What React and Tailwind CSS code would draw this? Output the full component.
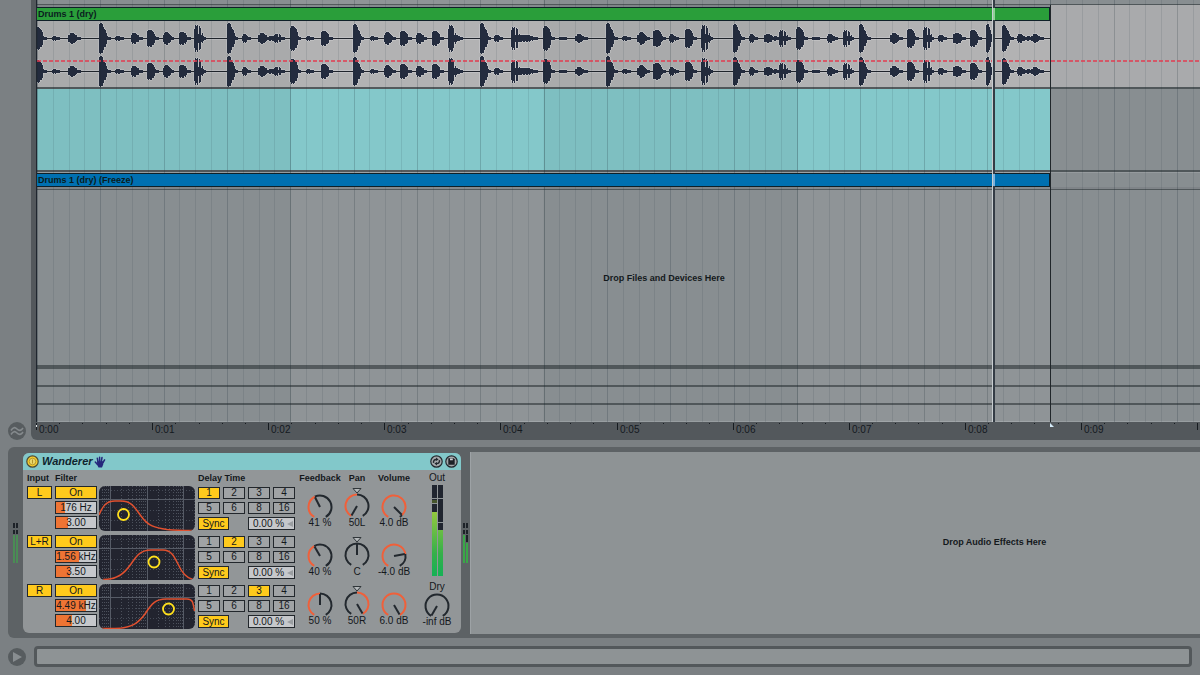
import clsx from 'clsx';

const BAR = 253.3;
const SECOND = 116.1;
const CLIP_END = 1013;

// x, width, amplitude, shape (offsets from the clip start)
const HITS = [
  [-2, 10, 11, 'fat'], [15, 6, 2, 'blob'], [31, 11, 5, 'blob'], [62, 10, 15, 'hit'], [78, 7, 2, 'blob'],
  [94, 10, 5, 'blob'], [110, 10, 8, 'fat'], [126, 9, 6, 'blob'], [142, 10, 6, 'fat'], [157, 10, 13, 'spiky'],
  [190, 9, 15, 'hit'], [205, 7, 4, 'blob'], [221, 11, 5, 'blob'], [232, 6, 2, 'fat'], [237, 9, 4, 'spiky'],
  [253, 9, 12, 'fat'], [269, 6, 2, 'blob'], [284, 10, 7, 'fat'], [316, 9, 14, 'hit'], [333, 6, 2, 'blob'],
  [347, 10, 6, 'blob'], [363, 10, 7, 'fat'], [379, 9, 5, 'blob'], [395, 10, 7, 'fat'], [411, 8, 13, 'spiky'],
  [418, 6, 3, 'hit'], [443, 9, 15, 'hit'], [457, 7, 3, 'blob'], [474, 9, 11, 'spiky'], [483, 16, 3, 'fat'],
  [506, 10, 12, 'fat'], [522, 6, 1, 'blob'], [538, 11, 4, 'blob'], [569, 10, 15, 'hit'], [585, 7, 2, 'blob'],
  [600, 11, 6, 'blob'], [616, 11, 8, 'fat'], [632, 8, 4, 'blob'], [648, 10, 9, 'fat'], [664, 10, 13, 'spiky'],
  [696, 10, 14, 'hit'], [712, 7, 4, 'blob'], [727, 11, 4, 'fat'], [737, 4, 2, 'fat'], [742, 10, 8, 'spiky'],
  [759, 10, 11, 'fat'], [775, 6, 1, 'blob'], [790, 9, 4, 'blob'], [806, 9, 8, 'spiky'], [822, 10, 14, 'hit'],
  [853, 11, 5, 'blob'], [870, 10, 9, 'fat'], [886, 9, 11, 'spiky'], [901, 7, 3, 'blob'], [916, 11, 5, 'fat'],
  [933, 10, 8, 'fat'], [949, 7, 14, 'hit'], [965, 10, 13, 'hit'], [980, 10, 4, 'blob'], [990, 4, 2, 'fat'],
  [994, 11, 4, 'blob'],
];

// height of each slice of a hit, relative to its peak
const SHAPES = {
  hit: [0.95, 1, 1, 0.9, 0.75, 0.6, 0.5, 0.3, 0.15, 0.08],
  fat: [0.85, 1, 1, 1, 0.95, 0.85, 0.75, 0.5, 0.2, 0.1],
  blob: [0.5, 0.9, 1, 1, 1, 0.85, 0.6, 0.5, 0.25, 0.15],
  spiky: [0.7, 1, 0.9, 1, 0.3, 0.9, 0.8, 0.25, 0.35, 0.15],
};

const wavePath = (mid) =>
  HITS.map(([x, w, amp, shape]) => {
    let d = '';
    for (let i = 0; i < w + 2; i++) {
      const px = x + i;
      if (px < 0 || px >= CLIP_END) continue;
      const level = i < w ? SHAPES[shape][Math.floor((i / w) * 10)] : 0.05;
      const h = Math.round(amp * level);
      const up = Math.max(1, h);
      const down = Math.max(1, h - (i % 3 === 2 ? 1 : 0));
      d += `M${px} ${mid - up}h1V${mid + 1 + down}h-1z`;
    }
    return d;
  }).join('');

const Waveform = () => (
  <svg className="relative block h-[66px] w-full" aria-hidden="true">
    {[17, 50].map((mid) => (
      <g key={mid}>
        <path d={wavePath(mid)} fill="none" stroke="#cdcdd0" strokeWidth="1" />
        <rect x="0" y={mid - 1} width="1013" height="3" fill="#c0c0c3" />
        <rect x="0" y={mid} width="1013" height="1" fill="#20242c" />
        <path d={wavePath(mid)} fill="#242c3f" shapeRendering="crispEdges" />
      </g>
    ))}
  </svg>
);

const TimeGrid = () => (
  <svg className="pointer-events-none absolute inset-0 h-full w-full" aria-hidden="true">
    {Array.from({ length: 8 }, (_, i) => (
      <rect key={i} x={i * 2 * BAR} y="0" width={BAR} height="100%" fill="#10202a" opacity="0.05" />
    ))}
    {Array.from({ length: 240 }, (_, i) => (
      <rect
        key={i}
        x={Math.round((i * BAR) / 16)}
        y="0"
        width="1"
        height="100%"
        fill="#182830"
        opacity={i % 16 === 0 ? 0.3 : i % 4 === 0 ? 0.2 : 0.1}
      />
    ))}
  </svg>
);

const ClipHeader = ({ name, className }) => (
  <div className="relative z-10 h-[14px]">
    <button
      type="button"
      className={clsx(
        'flex h-[14px] w-[1013px] items-center border-y border-r border-[#0f2028] px-px text-left text-[9px] leading-3 font-bold text-[#0a1c20]',
        className
      )}
    >
      {name}
    </button>
  </div>
);

const Separator = ({ className }) => <div className={clsx('relative bg-[#545a5d]', className)} />;

const Arrangement = () => (
  <section className="flex" aria-label="Arrangement">
    <div className="flex w-[31px] shrink-0 flex-col justify-end pl-[8px]">
      <button type="button" aria-label="Automation" className="size-[18px] rounded-full bg-[#575c5f]">
        <svg viewBox="0 0 18 18" className="size-[18px]" fill="none" stroke="#858a8d" strokeWidth="1.6">
          <path d="M3 8.500C5 5 7 5 9 7s4 2 6-1M3 12.500C5 9 7 9 9 11s4 2 6-1" />
        </svg>
      </button>
    </div>
    <div className="min-w-0 grow rounded-bl-md bg-[#53585c] pl-[5px]">
      <div className="relative overflow-hidden border-l border-[#20262f] bg-[#8f9497]">
        <div className="h-1" />
        <Separator className="h-px" />
        <div className="flex">
          <div className="w-[1013px] shrink-0">
            <div className="h-[2px] bg-[#858a8e]" />
            <ClipHeader name="Drums 1 (dry)" className="bg-[#2a9e3a]" />
            <div className="bg-[#b2b2b3]">
              <Waveform />
            </div>
          </div>
          <div className="grow bg-[#b1b2b4]" />
        </div>
        <Separator className="h-[2px]" />
        <div className="h-[81px] w-[1013px] bg-[#84c8ca]" />
        <Separator className="h-[2px]" />
        <div className="h-px bg-[#9da2a5]" />
        <ClipHeader name="Drums 1 (dry) (Freeze)" className="bg-[#0070b1]" />
        <div className="h-[2px] bg-[#858a8e]" />
        <Separator className="h-px" />
        <div className="flex h-[175px] items-center justify-center pt-[2px] pl-[91px] text-[9px] font-bold text-[#14191c]">
          Drop Files and Devices Here
        </div>
        <Separator className="h-1" />
        <div className="h-4" />
        <Separator className="h-[2px]" />
        <div className="h-4" />
        <Separator className="h-[2px]" />
        <div className="h-[17px] border-b border-[#a0a5a8]" />
        <TimeGrid />
        {/* volume automation */}
        <svg className="pointer-events-none absolute inset-x-0 top-[60px] h-[2px] w-full" aria-hidden="true">
          <line x1="0" y1="1" x2="100%" y2="1" stroke="#e23c50" strokeWidth="1.500" strokeDasharray="4 2" />
        </svg>
        <div className="absolute inset-y-0 left-[955px] z-20 w-[3px] border-l border-[#c8cdd0] bg-[#343c45]">
          <div className="mt-[8px] h-3 bg-[#8fd096]" />
          <div className="mt-[154px] h-3 bg-[#7cb2dc]" />
        </div>
        <div className="absolute top-[5px] bottom-0 left-[1013px] w-px bg-[#20262a]" />
      </div>
      <Ruler />
    </div>
  </section>
);

const Ruler = () => (
  <div className="relative h-[18px] overflow-hidden text-[10px] text-[#14191f]">
    <svg className="absolute inset-0 h-full w-full" aria-hidden="true">
      {Array.from({ length: 80 }, (_, i) => (
        <rect
          key={i}
          x={Math.round((i * SECOND) / 5)}
          y="1"
          width="1"
          height={i % 5 === 0 ? 7 : 1}
          fill="#161b20"
        />
      ))}
      <path d="M1014 1v4h4z" fill="#d6ecfa" />
      <rect x="0" y="3" width="1" height="2" fill="#e4e8ea" />
    </svg>
    {Array.from({ length: 10 }, (_, i) => (
      <span key={i} className="absolute top-[2px] leading-3" style={{ left: Math.round(i * SECOND) + 3 }}>
        0:{String(i).padStart(2, '0')}
      </span>
    ))}
  </div>
);

const polar = (cx, cy, r, deg) => {
  const a = (deg * Math.PI) / 180;
  return [cx + r * Math.sin(a), cy - r * Math.cos(a)];
};

const arc = (cx, cy, r, from, to) => {
  const [x1, y1] = polar(cx, cy, r, from);
  const [x2, y2] = polar(cx, cy, r, to);
  return `M${x1} ${y1}A${r} ${r} 0 ${to - from > 180 ? 1 : 0} 1 ${x2} ${y2}`;
};

const Knob = ({ label, angle, value, pan, className }) => {
  const cx = 18;
  const cy = pan ? 20 : 21;
  const start = pan ? Math.min(0, angle) : -150;
  const end = pan ? Math.max(0, angle) : angle;
  const [px, py] = polar(cx, cy, 11, angle);
  return (
    <label className={clsx('relative flex w-9 flex-col items-center text-[10px] leading-[10px] whitespace-nowrap', className)}>
      <svg viewBox="0 0 36 32" className="h-8 w-9" fill="none" strokeWidth="2">
        {start > -150 && <path d={arc(cx, cy, 11.5, -150, start)} stroke="#22282e" />}
        {end < 150 && <path d={arc(cx, cy, 11.5, end, 150)} stroke="#22282e" />}
        {end > start && <path d={arc(cx, cy, 11.5, start, end)} stroke="#f0603a" />}
        <path d={`M${cx} ${cy}L${px} ${py}`} stroke="#22282e" />
        {pan && <path d="M14 2.500h8l-4 4.500z" stroke="#30363a" strokeWidth="1" fill="#b4b8ba" />}
      </svg>
      {value}
      <input
        type="range"
        min="-150"
        max="150"
        defaultValue={angle}
        aria-label={label}
        className="absolute inset-0 h-full w-full opacity-0"
      />
    </label>
  );
};

const Toggle = ({ on, className, children }) => (
  <button
    type="button"
    aria-pressed={!!on}
    className={clsx(
      'flex items-center justify-center border border-[#22272c] text-[10px] leading-none text-[#14181c]',
      on ? 'bg-[#ffca1c]' : 'bg-[#a0a3a5]',
      className
    )}
  >
    {children}
  </button>
);

const ValueBox = ({ label, value, fill }) => (
  <input
    type="text"
    aria-label={label}
    defaultValue={value}
    className="h-[13px] w-[42px] border border-[#22272c] text-center text-[10px] leading-none text-[#14181c]"
    style={{ background: `linear-gradient(90deg, #ee7434 ${fill}%, #c6c8cb ${fill}%)` }}
  />
);

const DOTTED = [3, 5, 7, 9, 22, 29, 33, 37, 40, 42, 44, 46, 59, 66, 70, 74, 77, 79, 81, 83, 95];

const FilterScreen = ({ curve, node }) => (
  <svg viewBox="0 0 96 45" className="h-[45px] w-24 rounded-md bg-[#22242f]" fill="none" role="img" aria-label="Filter curve">
    {DOTTED.map((x) => (
      <path key={x} d={`M${x}.5 0V45`} stroke="#4c515c" strokeDasharray="1 2" />
    ))}
    <path d="M0 4.500H96M0 24.500H96M0 34.500H96" stroke="#454a56" strokeDasharray="1 2" />
    <path d="M11.500 0V45M48.500 0V45M84.500 0V45M0 13.500H96" stroke="#565b66" />
    <path d={curve} stroke="#e0502f" strokeWidth="1.500" />
    <circle cx={node[0]} cy={node[1]} r="5.500" stroke="#ffe01c" strokeWidth="1.800" />
  </svg>
);

const BANDS = [
  {
    input: 'L',
    freq: ['176 Hz', 22],
    q: ['3.00', 30],
    curve: 'M0 29C4 19 8 15 16 15H22C33 15 36 22 42 30C49 40 56 42 68 43.500C78 44.500 88 44.500 94 44.500',
    node: [24.5, 28.5],
    time: 1,
    feedback: ['41 %', -27],
    pan: ['50L', -150],
    volume: ['4.0 dB', 135],
  },
  {
    input: 'L+R',
    freq: ['1.56 kHz', 58],
    q: ['3.50', 35],
    curve: 'M4 44.500C18 44.500 25 39 32 29C38 20 42 15 52 15H64C72 15 75 21 79 29C83 38 87 43 94 44.500',
    node: [55, 27],
    time: 2,
    feedback: ['40 %', -30],
    pan: ['C', 0],
    volume: ['-4.0 dB', 80],
  },
  {
    input: 'R',
    freq: ['4.49 kHz', 74],
    q: ['4.00', 41],
    curve: 'M2 44.500H16C34 44 40 38 46 30C53 19 57 15 67 15H88C93 15 94 17 95.500 27',
    node: [69.5, 25],
    time: 3,
    feedback: ['50 %', 0],
    pan: ['50R', 150],
    volume: ['6.0 dB', 150],
  },
];

const Band = ({ band }) => (
  <>
    <Toggle on className="h-[13px] w-[25px]">{band.input}</Toggle>
    <div className="flex flex-col gap-[2px]">
      <Toggle on className="h-[13px] w-[42px]">On</Toggle>
      <ValueBox label="Frequency" value={band.freq[0]} fill={band.freq[1]} />
      <ValueBox label="Resonance" value={band.q[0]} fill={band.q[1]} />
    </div>
    <FilterScreen curve={band.curve} node={band.node} />
    <div className="grid w-[97px] grid-cols-4 grid-rows-[12px_12px_13px] gap-[3px] pt-px">
      {[1, 2, 3, 4, 5, 6, 8, 16].map((n) => (
        <Toggle key={n} on={n === band.time} className="h-3">{n}</Toggle>
      ))}
      <Toggle on className="col-span-2 h-[13px] w-[31px]">Sync</Toggle>
      <div className="relative col-span-2">
        <input
          type="text"
          aria-label="Delay offset"
          defaultValue="0.00 %"
          className="block h-[13px] w-full border border-[#22272c] bg-[#c6c8cb] pl-1 text-[10px] leading-none text-[#14181c]"
        />
        <svg viewBox="0 0 6 6" className="absolute top-[4px] right-[2px] size-[6px]" aria-hidden="true">
          <path d="M6 0v6L0 3z" fill="#9a9ea1" />
        </svg>
      </div>
    </div>
    <Knob label="Feedback" value={band.feedback[0]} angle={band.feedback[1]} />
    <Knob label="Pan" pan value={band.pan[0]} angle={band.pan[1]} />
    <Knob label="Volume" value={band.volume[0]} angle={band.volume[1]} />
  </>
);

const OutMeter = () => (
  <svg viewBox="0 0 11 91" className="h-[91px] w-[11px]" role="img" aria-label="Output level">
    <defs>
      <linearGradient id="level" x1="0" y1="27" x2="0" y2="91" gradientUnits="userSpaceOnUse">
        <stop offset="0" stopColor="#93c83e" />
        <stop offset="0.65" stopColor="#35b04a" />
        <stop offset="1" stopColor="#15b155" />
      </linearGradient>
    </defs>
    <path d="M0 0h5v91H0zM6 0h5v91H6z" fill="#20252f" />
    <path d="M0 27h5v64H0zM6 45h5v46H6z" fill="url(#level)" />
    <path d="M0 13.500h11M0 18.500h5M6 37.500h5" stroke="#8e9496" />
    <path d="M0 15h5v3H0z" fill="#46552c" />
  </svg>
);

const SideMeter = ({ active }) => (
  <svg viewBox="0 0 5 40" className="h-10 w-[5px]" aria-hidden="true">
    <path d="M0 0h2v5H0zM3 0h2v5H3zM0 7h2v4H0zM3 7h2v4H3z" fill="#1d2228" />
    <path d={active ? 'M0 12h2v28H0zM3 20h2v20H3z' : 'M0 12h2v28H0zM3 12h2v28H3z'} fill={active ? '#3aa648' : '#4a8c55'} />
    {active && <path d="M3 12h2v7H3z" fill="#1d2228" />}
  </svg>
);

const Device = () => (
  <article className="w-[438px] shrink-0 overflow-hidden rounded-md bg-[#929698] text-[#14181c]">
    <header className="flex h-[17px] items-center bg-[#82c8ca] px-[3px]">
      <button type="button" aria-label="Device on" className="size-[13px]">
        <svg viewBox="0 0 13 13" className="size-[13px]">
          <circle cx="6.500" cy="6.500" r="5.700" fill="#f4cb2c" stroke="#4c4d38" strokeWidth="1.200" />
          <circle cx="6.500" cy="6.500" r="3.300" fill="#e9d66a" stroke="#a98c22" strokeWidth="0.800" />
          <path d="M6.500 4.500v4" stroke="#a98c22" strokeWidth="0.900" />
        </svg>
      </button>
      <h2 className="pl-[3px] text-[11px] leading-none font-bold text-[#10242e] italic">Wanderer</h2>
      <svg viewBox="0 0 12 12" className="ml-px size-3" fill="none" stroke="#25287c" strokeLinecap="round" aria-hidden="true">
        <path d="M4 6 3.300 2.200M5.600 5.500V1.200M7.300 5.500 8 1.500M9 6.500 10.600 3.800M3.500 8.500 1.300 6" strokeWidth="1.500" />
        <path d="M3 5.200h6.500L9.200 8.500 8 11.500H4.500L3.300 9z" fill="#25287c" stroke="none" />
      </svg>
      <button type="button" aria-label="Hot-swap" className="ml-auto size-[13px]">
        <svg viewBox="0 0 13 13" className="size-[13px]" fill="none" stroke="#22282e">
          <circle cx="6.500" cy="6.500" r="5.700" fill="#a4a8ab" strokeWidth="1.200" />
          <path d="M3.600 7.800C3.200 5.500 4.500 4.200 6.500 4.400M9.400 5.200C9.800 7.500 8.500 8.800 6.500 8.600" strokeWidth="1.500" />
          <path d="M6 2.400 8.600 4.400 6 6zM7 7 4.400 8.600 7 10.600z" fill="#22282e" stroke="none" />
        </svg>
      </button>
      <button type="button" aria-label="Save preset" className="ml-[2px] size-[13px]">
        <svg viewBox="0 0 13 13" className="size-[13px]">
          <circle cx="6.500" cy="6.500" r="5.700" fill="#a4a8ab" stroke="#22282e" strokeWidth="1.200" />
          <path d="M3.300 3.300h5.400l1 1v5.400H3.300z" fill="#1c2127" />
          <path d="M5 3.500h2.800v1.800H5z" fill="#d0d3d5" />
        </svg>
      </button>
    </header>
    <div className="flex pl-1">
      <div className="grid grid-cols-[28px_44px_99px_104px_37px_37px_37px] grid-rows-[16px_49px_49px_49px]">
        <h3 className="text-[9px] leading-4 font-bold">Input</h3>
        <h3 className="text-[9px] leading-4 font-bold">Filter</h3>
        <span />
        <h3 className="text-[9px] leading-4 font-bold">Delay Time</h3>
        <h3 className="flex w-9 justify-center text-[9px] leading-4 font-bold">Feedback</h3>
        <h3 className="w-9 text-center text-[9px] leading-4 font-bold">Pan</h3>
        <h3 className="w-9 text-center text-[9px] leading-4 font-bold">Volume</h3>
        {BANDS.map((band) => (
          <Band key={band.input} band={band} />
        ))}
      </div>
      <div className="flex grow flex-col items-center text-[10px]">
        <h3 className="leading-[15px]">Out</h3>
        <OutMeter />
        <div className="relative flex flex-col items-center pt-[5px]">
          <span className="leading-3">Dry</span>
          <Knob label="Dry" value="-inf dB" angle={-150} className="-mt-2" />
        </div>
      </div>
    </div>
  </article>
);

const DeviceChain = () => (
  <section className="mt-[7px] ml-2 flex rounded-l-md bg-[#5d6265] pt-[5px] pb-1" aria-label="Devices">
    <div className="flex w-[15px] shrink-0 items-center justify-center">
      <SideMeter />
    </div>
    <div className="flex pt-px pb-px">
      <Device />
    </div>
    <div className="flex w-[9px] shrink-0 items-center justify-center">
      <SideMeter active />
    </div>
    <div className="flex grow items-center justify-center border-l border-[#9da2a5] bg-[#8e9395] pl-[318px] text-[9px] font-bold text-[#14191c]">
      Drop Audio Effects Here
    </div>
  </section>
);

const StatusBar = () => (
  <footer className="flex items-center gap-2 py-2 pr-2 pl-2">
    <button type="button" aria-label="Preview" className="size-[18px] shrink-0 rounded-full bg-[#575c5f]">
      <svg viewBox="0 0 18 18" className="size-[18px]">
        <path d="M5 4v10l9-5z" fill="#888d90" />
      </svg>
    </button>
    <div className="h-[21px] grow rounded-sm border-[3px] border-[#53585b] bg-[#8e9395]" />
  </footer>
);

export default function App() {
  return (
    <main className="min-h-screen overflow-hidden bg-[#7b8083] font-['Liberation_Sans',Arial,sans-serif]">
      <Arrangement />
      <DeviceChain />
      <StatusBar />
    </main>
  );
}
